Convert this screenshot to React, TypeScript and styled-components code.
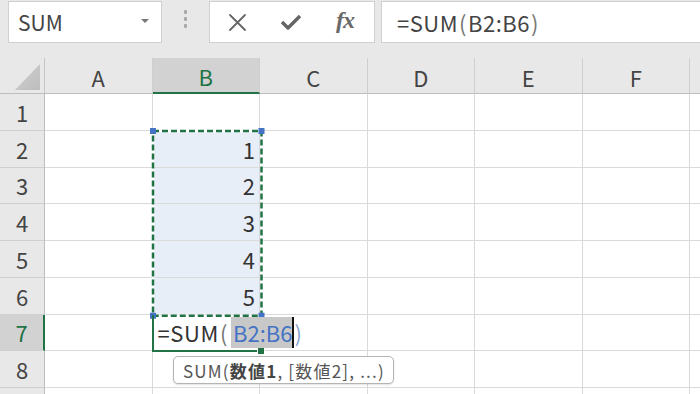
import { type FC } from "react";
import styled, { createGlobalStyle } from "styled-components";

const GREEN = "#217346";
const BLUE = "#4472c4";
const HEAD_W = 45;
const HEAD_H = 36;
const COL_W = 107.5;
const ROW_H = 36.75;
const TOP_H = 58;
const FONT = `"Noto Sans CJK JP", "Noto Sans", sans-serif`;

// G and row 9 only peek in at the edges, so they carry no label
const columns = ["A", "B", "C", "D", "E", "F", ""];
const rows = [1, 2, 3, 4, 5, 6, 7, 8, 9];
const values: Record<string, string> = { B2: "1", B3: "2", B4: "3", B5: "4", B6: "5" };

const colX = (i: number) => HEAD_W + COL_W * i;
const rowY = (r: number) => HEAD_H + ROW_H * (r - 1);

const GlobalStyle = createGlobalStyle`
  html, body {
    margin: 0;
    height: 394px;
    overflow: hidden;
    background: #e8e8e8;
    font-family: ${FONT};
  }
`;

const Page = styled.div`
  display: flex;
  flex-direction: column;
  width: 700px;
  height: 394px;
  overflow: hidden;
`;

const TopBar = styled.div`
  flex: 0 0 ${TOP_H}px;
  display: flex;
  align-items: flex-start;
  padding: 1px 0 0 8px;
  box-sizing: border-box;
  background: #e8e8e8;
`;

const Box = styled.div`
  height: 42px;
  background: #fff;
  border: 1px solid #d0d0d0;
  box-sizing: border-box;
  display: flex;
  align-items: center;
`;

const NameBox = styled(Box)`
  width: 154px;
  padding: 0 12px 0 9px;
  justify-content: space-between;
  font-size: 21px;
  color: #444;
`;

const Caret = styled.span`
  width: 0;
  height: 0;
  border-left: 4px solid transparent;
  border-right: 4px solid transparent;
  border-top: 4px solid #777;
  margin-top: -3px;
`;

const Grip = styled.div`
  width: 47px;
  height: 42px;
  display: flex;
  flex-direction: column;
  align-items: center;
  justify-content: center;
  gap: 3px;
  padding-bottom: 6px;
  box-sizing: border-box;
  span {
    width: 3px;
    height: 4px;
    border-radius: 1px;
    background: #aaa;
  }
`;

const ButtonBox = styled(Box)`
  width: 166px;
`;

const ToolButton = styled.div`
  width: 54px;
  height: 40px;
  display: flex;
  align-items: center;
  justify-content: center;
  color: #666;
`;

const Fx = styled.span`
  font-family: "Liberation Serif", "DejaVu Serif", serif;
  font-style: italic;
  font-weight: 700;
  font-size: 24px;
  color: #6a6a6a;
  letter-spacing: -1px;
  margin-top: -4px;
`;

const FormulaBox = styled(Box)`
  flex: 1;
  margin-left: 6px;
  padding-left: 15px;
  border-right: none;
  font-size: 22px;
  letter-spacing: 0.5px;
  color: #444;
  white-space: nowrap;
`;

const Paren = styled.span<{ $color?: string }>`
  color: ${({ $color }) => $color ?? "#777"};
  padding: 0 1px;
`;

const Sheet = styled.div`
  position: relative;
  flex: 1;
  overflow: hidden;
  display: grid;
  grid-template-columns: ${HEAD_W}px repeat(7, ${COL_W}px);
  grid-template-rows: ${HEAD_H}px repeat(9, ${ROW_H}px);
  background: #fff;
  font-size: 21px;
`;

const Corner = styled.div`
  background: #e8e8e8;
  border-right: 1px solid #c6c6c6;
  border-bottom: 1px solid #bdbdbd;
  box-sizing: border-box;
  display: flex;
  align-items: flex-end;
  justify-content: flex-end;
  padding: 0 4px 3px 0;
`;

const SelectAll = styled.div`
  width: 25px;
  height: 26px;
  background: linear-gradient(135deg, #d0d0d0, #bdbdbd);
  clip-path: polygon(100% 0, 100% 100%, 0 100%);
`;

const ColHeader = styled.div<{ $active?: boolean }>`
  background: ${({ $active }) => ($active ? "#d2d2d2" : "#e8e8e8")};
  color: ${({ $active }) => ($active ? GREEN : "#444")};
  border-right: 1px solid #cfcfcf;
  border-bottom: ${({ $active }) => ($active ? `2px solid ${GREEN}` : "1px solid #bdbdbd")};
  box-sizing: border-box;
  display: flex;
  align-items: center;
  justify-content: center;
  font-size: 22px;
  padding-top: 2px;
`;

const RowHeader = styled.div<{ $active?: boolean }>`
  background: ${({ $active }) => ($active ? "#d2d2d2" : "#e8e8e8")};
  color: ${({ $active }) => ($active ? GREEN : "#444")};
  border-right: ${({ $active }) => ($active ? `2px solid ${GREEN}` : "1px solid #bdbdbd")};
  border-bottom: 1px solid #cfcfcf;
  box-sizing: border-box;
  display: flex;
  align-items: center;
  justify-content: center;
  font-size: 22px;
`;

const Cell = styled.div<{ $inRange?: boolean }>`
  background: ${({ $inRange }) => ($inRange ? "#e8eef8" : "#fff")};
  border-right: 1px solid #dadada;
  border-bottom: 1px solid #dadada;
  box-sizing: border-box;
  display: flex;
  align-items: center;
  justify-content: flex-end;
  padding-right: 4px;
  color: #333;
  font-size: 22px;
`;

const RangeFrame = styled.svg`
  position: absolute;
  left: ${colX(1) - 2}px;
  top: ${rowY(2) - 2}px;
  overflow: visible;
  pointer-events: none;
`;

const ActiveCell = styled.div`
  position: absolute;
  left: ${colX(1) - 1}px;
  top: ${rowY(7)}px;
  width: ${COL_W + 1}px;
  height: ${ROW_H + 1}px;
  border-left: 2px solid ${GREEN};
  border-bottom: 2px solid ${GREEN};
  box-sizing: border-box;
`;

const FillHandle = styled.div`
  position: absolute;
  right: -4px;
  bottom: -4px;
  width: 6px;
  height: 6px;
  background: ${GREEN};
  outline: 1px solid #fff;
`;

const EditLine = styled.div`
  position: absolute;
  left: ${colX(1) + 5}px;
  top: ${rowY(7) + 2}px;
  height: ${ROW_H - 5}px;
  display: flex;
  align-items: stretch;
  white-space: nowrap;
  font-size: 22px;
  color: #333;
`;

const EditText = styled.span`
  display: flex;
  align-items: center;
  letter-spacing: 0.6px;
`;

const RefMark = styled.span`
  display: flex;
  align-items: center;
  background: #c8c8c8;
  color: ${BLUE};
  padding: 0 0 0 2px;
  margin-left: 2px;
  border-right: 2px solid #111;
`;

const CloseParen = styled.span`
  display: flex;
  align-items: center;
  color: #8aa4d4;
`;

const Tooltip = styled.div`
  position: absolute;
  left: 173px;
  top: ${356 - TOP_H}px;
  height: 26px;
  padding: 0 8px 0 9px;
  display: flex;
  align-items: center;
  background: #fff;
  border: 1px solid #b4b4b4;
  border-radius: 5px;
  box-shadow: 0 1px 2px rgba(0, 0, 0, 0.12);
  font-size: 17px;
  letter-spacing: 1.2px;
  color: #555;
  white-space: nowrap;
  b {
    color: #444;
    font-weight: 700;
  }
`;

const rangeW = COL_W + 1;
const rangeH = ROW_H * 5 + 1;
const handles: [number, number][] = [
  [0, 0],
  [rangeW, 0],
  [0, rangeH],
  [rangeW, rangeH],
];

const App: FC = () => {
  return (
    <Page>
      <GlobalStyle />
      <TopBar>
        <NameBox>
          SUM
          <Caret />
        </NameBox>
        <Grip>
          <span />
          <span />
          <span />
        </Grip>
        <ButtonBox>
          <ToolButton>
            <svg width="19" height="19" viewBox="0 0 19 19">
              <path d="M2 2 L17 17 M17 2 L2 17" stroke="#666" strokeWidth="1.8" strokeLinecap="round" />
            </svg>
          </ToolButton>
          <ToolButton>
            <svg width="22" height="18" viewBox="0 0 22 18">
              <path d="M2 9 L8 15 L20 3" stroke="#666" strokeWidth="3.4" fill="none" strokeLinejoin="round" />
            </svg>
          </ToolButton>
          <ToolButton>
            <Fx>fx</Fx>
          </ToolButton>
        </ButtonBox>
        <FormulaBox>
          =SUM<Paren>(</Paren>B2:B6<Paren>)</Paren>
        </FormulaBox>
      </TopBar>
      <Sheet>
        <Corner>
          <SelectAll />
        </Corner>
        {columns.map((c, i) => (
          <ColHeader key={i} $active={c === "B"}>
            {c}
          </ColHeader>
        ))}
        {rows.map((r) => [
          <RowHeader key={`h${r}`} $active={r === 7}>
            {r < 9 ? r : ""}
          </RowHeader>,
          ...columns.map((c, i) => {
            const id = `${c}${r}`;
            return (
              <Cell key={`${i}-${r}`} $inRange={c === "B" && r >= 2 && r <= 6}>
                {values[id]}
              </Cell>
            );
          }),
        ])}
        <RangeFrame width={rangeW + 4} height={rangeH + 4}>
          <g transform="translate(2 2)">
            <rect x="0" y="0" width={rangeW} height={rangeH} fill="none" stroke="#fff" strokeWidth="2.5" />
            <rect
              x="0"
              y="0"
              width={rangeW}
              height={rangeH}
              fill="none"
              stroke={GREEN}
              strokeWidth="2.5"
              strokeDasharray="6 3"
            />
            {handles.map(([x, y], i) => (
              <rect key={i} x={x - 3} y={y - 3} width="6" height="6" fill={BLUE} />
            ))}
          </g>
        </RangeFrame>
        <ActiveCell>
          <FillHandle />
        </ActiveCell>
        <EditLine>
          <EditText>
            =SUM<Paren>(</Paren>
          </EditText>
          <RefMark>B2:B6</RefMark>
          <CloseParen>)</CloseParen>
        </EditLine>
        <Tooltip>
          SUM(<b>数値1</b>, [数値2], ...)
        </Tooltip>
      </Sheet>
    </Page>
  );
};

export default App;
